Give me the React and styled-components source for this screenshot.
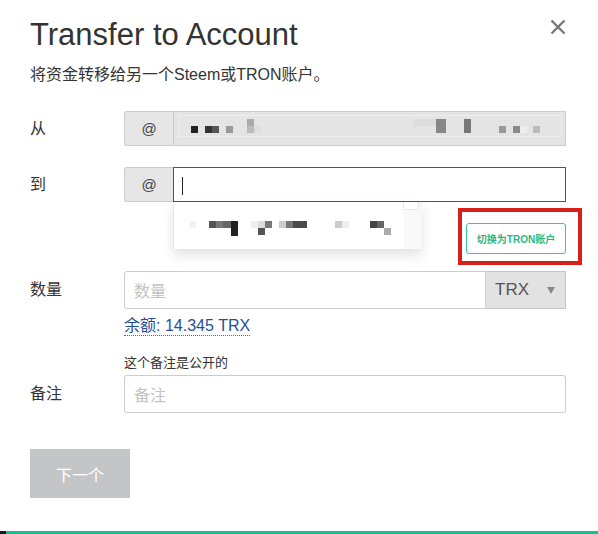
import React from "react";
import styled, { createGlobalStyle } from "styled-components";

const GlobalStyle = createGlobalStyle`
  body {
    margin: 0;
    background: #ffffff;
    font-family: "Liberation Sans", "Noto Sans CJK SC", sans-serif;
    color: #333333;
  }
`;

// 打码的账户名（灰色方块）
const fromBlocks = [
  { l: 11, w: 7, t: 10, h: 7, c: "#222" },
  { l: 25, w: 7, t: 10, h: 7, c: "#333" },
  { l: 32, w: 7, t: 10, h: 7, c: "#555" },
  { l: 46, w: 7, t: 10, h: 7, c: "#999" },
  { l: 67, w: 7, t: 3, h: 7, c: "#aaa" },
  { l: 67, w: 7, t: 10, h: 7, c: "#bbb" },
  { l: 74, w: 7, t: 10, h: 7, c: "#ddd" },
  { l: 234, w: 22, t: 3, h: 7, c: "#ddd" },
  { l: 256, w: 10, t: 3, h: 14, c: "#888" },
  { l: 284, w: 7, t: 3, h: 14, c: "#777" },
  { l: 319, w: 7, t: 10, h: 7, c: "#999" },
  { l: 333, w: 7, t: 10, h: 7, c: "#888" },
  { l: 340, w: 7, t: 10, h: 7, c: "#eee" },
  { l: 353, w: 7, t: 10, h: 7, c: "#bbb" },
];

const toBlocks = [
  { l: 15, w: 7, t: 19, h: 7, c: "#f3f3f3" },
  { l: 35, w: 7, t: 19, h: 7, c: "#555" },
  { l: 42, w: 7, t: 19, h: 7, c: "#777" },
  { l: 49, w: 8, t: 19, h: 7, c: "#666" },
  { l: 57, w: 7, t: 19, h: 15, c: "#222" },
  { l: 77, w: 7, t: 19, h: 7, c: "#eee" },
  { l: 84, w: 7, t: 19, h: 7, c: "#ddd" },
  { l: 84, w: 7, t: 26, h: 7, c: "#555" },
  { l: 91, w: 7, t: 19, h: 7, c: "#777" },
  { l: 105, w: 7, t: 19, h: 7, c: "#ccc" },
  { l: 112, w: 7, t: 19, h: 7, c: "#777" },
  { l: 119, w: 14, t: 19, h: 7, c: "#4a4a4a" },
  { l: 161, w: 7, t: 19, h: 7, c: "#ccc" },
  { l: 168, w: 7, t: 19, h: 7, c: "#eee" },
  { l: 196, w: 7, t: 19, h: 7, c: "#444" },
  { l: 203, w: 7, t: 19, h: 7, c: "#666" },
  { l: 210, w: 7, t: 26, h: 7, c: "#aaa" },
];

export const TransferModal = () => {
  return (
    <Modal>
      <GlobalStyle />
      <Header>
        <Title>Transfer to Account</Title>
        <CloseBtn aria-label="close">
          <svg width="16" height="16" viewBox="0 0 16 16">
            <path d="M1.5 1.5 L14.5 14.5 M14.5 1.5 L1.5 14.5" stroke="#777" strokeWidth="2.4" />
          </svg>
        </CloseBtn>
      </Header>
      <SubTitle>将资金转移给另一个Steem或TRON账户。</SubTitle>

      <Row $top={26}>
        <Label $h={35}>从</Label>
        <InputGroup>
          <Addon>@</Addon>
          <DisabledInput>
            <Redacted>
              {fromBlocks.map((b, i) => (
                <Pixel key={i} style={{ left: b.l, top: b.t, width: b.w, height: b.h, background: b.c }} />
              ))}
            </Redacted>
          </DisabledInput>
        </InputGroup>
      </Row>

      <Row $top={21}>
        <Label $h={35}>到</Label>
        <InputGroup>
          <Addon>@</Addon>
          <FocusInput>
            <Caret />
            <Dropdown>
              {toBlocks.map((b, i) => (
                <Pixel key={i} style={{ left: b.l, top: b.t, width: b.w, height: b.h, background: b.c }} />
              ))}
              <ScrollTrack>
                <ScrollStub />
              </ScrollTrack>
            </Dropdown>
          </FocusInput>
        </InputGroup>
      </Row>

      <SwitchRow>
        <SwitchWrap>
          <Highlight />
          <SwitchBtn>切换为TRON账户</SwitchBtn>
        </SwitchWrap>
      </SwitchRow>

      <Row $top={17}>
        <Label $h={38}>数量</Label>
        <Field>
          <InputGroup>
            <TextInput $joined>
              <Placeholder>数量</Placeholder>
            </TextInput>
            <Select>
              TRX
              <Arrow />
            </Select>
          </InputGroup>
          <Balance>余额: 14.345 TRX</Balance>
        </Field>
      </Row>

      <Row $top={18}>
        <Label $h={38} $offset={21}>备注</Label>
        <Field>
          <Hint>这个备注是公开的</Hint>
          <InputGroup>
            <TextInput>
              <Placeholder>备注</Placeholder>
            </TextInput>
          </InputGroup>
        </Field>
      </Row>

      <NextBtn>下一个</NextBtn>

      <Footer>
        <FooterDark />
        <FooterGreen />
      </Footer>
    </Modal>
  );
};

const Modal = styled.div`
  width: 598px;
  min-height: 534px;
  box-sizing: border-box;
  padding: 0 32px 0 30px;
  display: flex;
  flex-direction: column;
  background: #ffffff;
`;

const Header = styled.div`
  display: flex;
  justify-content: space-between;
  align-items: flex-start;
  padding-top: 16px;
`;

const Title = styled.h1`
  margin: 0;
  font-size: 31px;
  line-height: 37px;
  font-weight: 400;
  color: #333;
`;

const CloseBtn = styled.button`
  border: none;
  background: none;
  padding: 0;
  margin-top: 2px;
  width: 17px;
  height: 17px;
  display: flex;
  align-items: center;
  justify-content: center;
  cursor: pointer;
`;

const SubTitle = styled.div`
  margin-top: 12px;
  font-size: 16px;
  line-height: 20px;
  color: #333;
`;

const Row = styled.div`
  display: grid;
  grid-template-columns: 94px 1fr;
  align-items: start;
  margin-top: ${(p) => p.$top}px;
`;

const Label = styled.div`
  font-size: 16px;
  color: #333;
  height: ${(p) => p.$h}px;
  line-height: ${(p) => p.$h}px;
  margin-top: ${(p) => p.$offset || 0}px;
`;

const Field = styled.div`
  display: flex;
  flex-direction: column;
`;

const InputGroup = styled.div`
  display: flex;
  width: 100%;
`;

const Addon = styled.div`
  width: 49px;
  height: 35px;
  box-sizing: border-box;
  background: #e6e6e6;
  border: 1px solid #cccccc;
  border-right: none;
  border-radius: 3px 0 0 3px;
  display: flex;
  align-items: center;
  justify-content: center;
  font-size: 15px;
  color: #444;
`;

const DisabledInput = styled.div`
  flex: 1;
  height: 35px;
  box-sizing: border-box;
  background: #e4e4e4;
  border: 1px solid #cccccc;
  padding: 3px 3px 0 5px;
`;

const Redacted = styled.div`
  position: relative;
  height: 20px;
  border: 1px solid #eeeeee;
`;

const Pixel = styled.span`
  position: absolute;
  display: block;
`;

const FocusInput = styled.div`
  position: relative;
  flex: 1;
  height: 35px;
  box-sizing: border-box;
  background: #ffffff;
  border: 1px solid #555555;
`;

const Caret = styled.span`
  display: block;
  width: 1px;
  height: 18px;
  background: #222;
  margin: 9px 0 0 8px;
`;

const Dropdown = styled.div`
  position: absolute;
  top: 34px;
  left: -1px;
  width: 248px;
  height: 47px;
  background: #ffffff;
  border-left: 1px solid #e6e6e6;
  box-shadow: 0 6px 12px rgba(0, 0, 0, 0.12);
  z-index: 2;
`;

const ScrollTrack = styled.div`
  position: absolute;
  top: 0;
  right: 0;
  width: 18px;
  height: 100%;
  background: #f8f8f8;
`;

const ScrollStub = styled.div`
  width: 14px;
  height: 7px;
  margin-left: -1px;
  border: 1px solid #e8e8e8;
  border-top: none;
  background: #ffffff;
`;

const SwitchRow = styled.div`
  display: flex;
  justify-content: flex-end;
  margin-top: 21px;
`;

const SwitchWrap = styled.div`
  position: relative;
`;

const Highlight = styled.div`
  position: absolute;
  left: -8px;
  right: -16px;
  top: -15px;
  bottom: -11px;
  border: 4px solid #d8201a;
  pointer-events: none;
`;

const SwitchBtn = styled.button`
  width: 100px;
  height: 31px;
  box-sizing: border-box;
  background: #ffffff;
  border: 1px solid #2fcb95;
  border-radius: 3px;
  color: #1fba86;
  font-family: "Liberation Sans", "Noto Sans CJK SC", sans-serif;
  font-size: 10px;
  font-weight: 700;
  padding: 0;
`;

const TextInput = styled.div`
  flex: 1;
  height: 38px;
  box-sizing: border-box;
  border: 1px solid #cccccc;
  border-radius: ${(p) => (p.$joined ? "3px 0 0 3px" : "3px")};
  display: flex;
  align-items: center;
  padding-left: 9px;
  background: #ffffff;
`;

const Placeholder = styled.span`
  font-size: 16px;
  color: #c2c2c2;
`;

const Select = styled.div`
  width: 80px;
  height: 38px;
  box-sizing: border-box;
  background: #e2e2e2;
  border: 1px solid #c6c6c6;
  border-left: none;
  display: flex;
  align-items: center;
  justify-content: space-between;
  padding: 0 10px 0 9px;
  font-size: 17px;
  color: #555;
`;

const Arrow = styled.span`
  width: 0;
  height: 0;
  border-left: 4px solid transparent;
  border-right: 4px solid transparent;
  border-top: 7px solid #888;
`;

const Balance = styled.span`
  align-self: flex-start;
  margin-top: 8px;
  font-size: 16px;
  line-height: 18px;
  color: #1f4f99;
  border-bottom: 1px dotted #666;
`;

const Hint = styled.div`
  font-size: 13px;
  line-height: 17px;
  color: #333;
  margin-bottom: 4px;
`;

const NextBtn = styled.button`
  align-self: flex-start;
  margin-top: 36px;
  width: 100px;
  height: 49px;
  border: none;
  background: #c4c5c7;
  color: #ffffff;
  font-family: "Liberation Sans", "Noto Sans CJK SC", sans-serif;
  font-size: 16px;
`;

const Footer = styled.div`
  display: flex;
  margin: auto -32px 0 -30px;
  height: 3px;
`;

const FooterDark = styled.div`
  width: 6px;
  background: #1a1a1a;
`;

const FooterGreen = styled.div`
  flex: 1;
  background: #17be8f;
`;

export default TransferModal;
